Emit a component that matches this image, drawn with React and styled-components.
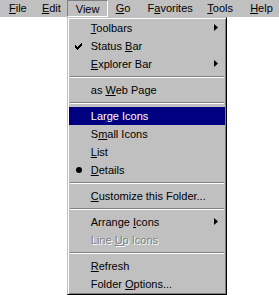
import React from "react";
import styled, { createGlobalStyle } from "styled-components";

const Global = createGlobalStyle`
  html, body { margin: 0; padding: 0; background: #ffffff; }
  body { font-family: "Liberation Sans", Arial, sans-serif; font-size: 11px; color: #000; }
  u { text-decoration: underline; text-underline-offset: 1px; text-decoration-thickness: 1px; }
`;

const Page = styled.div`
  width: 279px;
  height: 295px;
  overflow: hidden;
  position: relative;
  background: #fff;
`;

const MenuBar = styled.div`
  display: flex;
  height: 17px;
  padding-left: 1px;
  background: #c0c0c0;
`;

const BarItem = styled.div`
  position: relative;
  box-sizing: border-box;
  width: ${(p) => p.$w}px;
  height: 17px;
  line-height: 17px;
  padding-left: ${(p) => (p.$pressed ? 9 : 8)}px;
  white-space: nowrap;
  border: 1px solid transparent;
  border-left-width: 0;
  border-top-width: 0;
  ${(p) =>
    p.$pressed &&
    `
    border-width: 1px;
    border-color: #808080 #ffffff #ffffff #808080;
    line-height: 15px;
    padding-left: 8px;
    padding-top: 1px;
  `}
`;

const Dropdown = styled.div`
  position: absolute;
  top: 16px;
  left: -1px;
  width: 160px;
  box-sizing: border-box;
  background: #c0c0c0;
  border: 1px solid;
  border-color: #c0c0c0 #000000 #000000 #c0c0c0;
  box-shadow: inset 1px 1px 0 #ffffff, inset -1px -1px 0 #808080;
  padding: 1px;
  display: flex;
  flex-direction: column;
  z-index: 2;
`;

const Item = styled.div`
  position: relative;
  height: 18px;
  line-height: 18px;
  padding-left: 22px;
  white-space: nowrap;
  background: ${(p) => (p.$active ? "#000080" : "transparent")};
  color: ${(p) => (p.$disabled ? "#808080" : p.$active ? "#ffffff" : "#000000")};
  text-shadow: ${(p) => (p.$disabled ? "1px 1px 0 #ffffff" : "none")};
`;

const Separator = styled.div`
  height: 8px;
  display: flex;
  align-items: center;
  padding: 0 1px;
  &::before {
    content: "";
    flex: 1;
    height: 1px;
    border-top: 1px solid #808080;
    border-bottom: 1px solid #ffffff;
    height: 0;
  }
`;

const Mark = styled.span`
  position: absolute;
  left: 6px;
  top: 0;
  height: 18px;
  width: 8px;
  display: flex;
  align-items: center;
  justify-content: center;
`;

const Bullet = styled.span`
  width: 6px;
  height: 6px;
  border-radius: 50%;
  background: #000;
`;

const Arrow = styled.svg`
  position: absolute;
  right: 7px;
  top: 5px;
  width: 4px;
  height: 7px;
`;

const Check = () => (
  <svg width="7" height="7" viewBox="0 0 7 7" shapeRendering="crispEdges">
    <path
      fill="#000"
      d="M6 0h1v3h-1zM5 1h1v3h-1zM0 2h1v3h-1zM1 3h1v3h-1zM2 4h1v3h-1zM3 3h1v3h-1zM4 2h1v3h-1z"
    />
  </svg>
);

const SubArrow = ({ color = "#000" }) => (
  <Arrow viewBox="0 0 4 7">
    <polygon points="0,0 4,3.5 0,7" fill={color} />
  </Arrow>
);

const barItems = [
  { w: 33, pre: "", acc: "F", post: "ile" },
  { w: 33, pre: "", acc: "E", post: "dit" },
  { w: 41, pre: "View", acc: "", post: "", pressed: true },
  { w: 32, pre: "", acc: "G", post: "o" },
  { w: 60, pre: "F", acc: "a", post: "vorites" },
  { w: 43, pre: "", acc: "T", post: "ools" },
  { w: 37, pre: "", acc: "H", post: "elp" },
];

const menu = [
  { pre: "", acc: "T", post: "oolbars", sub: true },
  { pre: "Status ", acc: "B", post: "ar", check: true },
  { pre: "", acc: "E", post: "xplorer Bar", sub: true },
  { sep: true },
  { pre: "as ", acc: "W", post: "eb Page" },
  { sep: true },
  { pre: "Lar", acc: "g", post: "e Icons", active: true },
  { pre: "S", acc: "m", post: "all Icons" },
  { pre: "", acc: "L", post: "ist" },
  { pre: "", acc: "D", post: "etails", bullet: true },
  { sep: true },
  { pre: "", acc: "C", post: "ustomize this Folder..." },
  { sep: true },
  { pre: "Arrange ", acc: "I", post: "cons", sub: true },
  { pre: "Line ", acc: "U", post: "p Icons", disabled: true },
  { sep: true },
  { pre: "", acc: "R", post: "efresh" },
  { pre: "Folder ", acc: "O", post: "ptions..." },
];

const Label = ({ pre, acc, post }) => (
  <>
    {pre}
    {acc && <u>{acc}</u>}
    {post}
  </>
);

export default function App() {
  return (
    <Page>
      <Global />
      <MenuBar>
        {barItems.map((b, i) => (
          <BarItem key={i} $w={b.w} $pressed={b.pressed}>
            <Label {...b} />
            {b.pressed && (
              <Dropdown>
                {menu.map((m, j) =>
                  m.sep ? (
                    <Separator key={j} />
                  ) : (
                    <Item key={j} $active={m.active} $disabled={m.disabled}>
                      {m.check && (
                        <Mark>
                          <Check />
                        </Mark>
                      )}
                      {m.bullet && (
                        <Mark>
                          <Bullet />
                        </Mark>
                      )}
                      <Label {...m} />
                      {m.sub && <SubArrow color={m.active ? "#fff" : "#000"} />}
                    </Item>
                  )
                )}
              </Dropdown>
            )}
          </BarItem>
        ))}
      </MenuBar>
    </Page>
  );
}
